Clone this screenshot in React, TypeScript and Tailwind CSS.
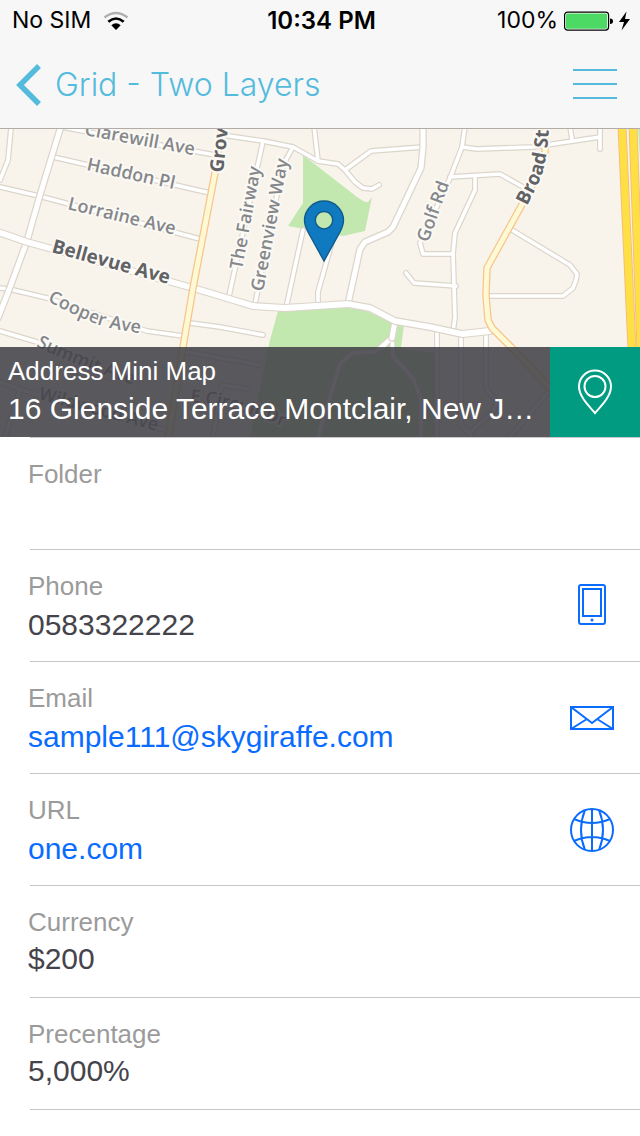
import React from "react";

const minorRoads = [
  "M11 128L8 160L0 180",
  "M62 127L83 131L215 155",
  "M53 157L210 193",
  "M0 187L39 196L200 239",
  "M0 288L9 289L47 298L147 331L183 336",
  "M0 331L37 342L110 378",
  "M190 323L220 327L263 335",
  "M222 135L263 141L293 147L318 161L338 164L345 170L355 182L363 188L372 189L379 185",
  "M314 126L318 161",
  "M345 170L371 151L423 147",
  "M263 141L229 296",
  "M293 147L283 165L255 304",
  "M303 230L286 308",
  "M332 242L318 292L318 306",
  "M465 126L462 147L450 178L420 243L423 254L453 254",
  "M462 147L477 149L533 147L600 137",
  "M600 126L600 149",
  "M570 126L572 140",
  "M450 177L500 174L523 187",
  "M475 177L475 190L455 233L453 254L455 317L453 332",
  "M406 273L414 283L456 286",
  "M512 230L570 265L577 274L576 280L573 288L563 296L488 296",
  "M437 331V440",
  "M461 334V425L475 440",
  "M486 332V388L497 402L493 412L470 432",
  "M187 352L260 365",
  "M0 382L40 396L165 430",
  "M20 390L5 437",
  "M213 437L222 385L248 389",
  "M382 348L392 337",
  "M318 437L332 390L340 364L352 353L375 352L392 337",
  "M392 337L393 356L414 380L421 400V437",
  "M550 390L510 437",
];

const midRoads = [
  "M61 126L40 195L27 241L9 290L-2 318",
  "M423 126L423 147L421 168L393 227L388 232L365 242L360 249L348 304",
  "M395 321L392 338",
];

const mainRoads = [
  "M-2 232L27 242L193 288L210 293L253 306L285 308L348 304L370 308L395 321L430 327L462 334L490 331",
];

const arterials = [
  "M222 126L215 173L193 288L183 347L168 440",
  "M545 126L545 152L530 190L487 268L486 295L488 320L492 328L512 348L550 388",
];

const highways = ["M622 126L632 350L635 440", "M633 126L641 350L644 440"];

const streetNames = [
  { id: "clarewill", name: "Clarewill Ave", d: "M84 135L220 160", bold: false },
  { id: "haddon", name: "Haddon Pl", d: "M86 170L200 195", bold: false },
  { id: "lorraine", name: "Lorraine Ave", d: "M67 209L200 241", bold: false },
  { id: "bellevue", name: "Bellevue Ave", d: "M51 252L190 290", bold: true },
  { id: "cooper", name: "Cooper Ave", d: "M47 301Q78 317 96 324T180 338", bold: false },
  { id: "summit", name: "Summit Ave", d: "M36 346Q70 364 160 394", bold: false },
  { id: "wildwood", name: "Wildwood Ave", d: "M38 399L190 440", bold: false },
  { id: "circuit", name: "E Circuit Dr", d: "M190 402Q240 406 300 434", bold: false },
  { id: "grove", name: "Grove", d: "M223 173L231 100", bold: true },
  { id: "fairway", name: "The Fairway", d: "M242 270L264 150", bold: false },
  { id: "greenview", name: "Greenview Way", d: "M263 292L292 140", bold: false },
  { id: "golf", name: "Golf Rd", d: "M428 243L456 165", bold: false },
  { id: "broad", name: "Broad St", d: "M527 206L538 184Q548 165 549 120", bold: true },
];

function Roads({
  paths,
  casing,
  fill,
  outer,
  inner,
}: {
  paths: string[];
  casing: string;
  fill: string;
  outer: number;
  inner: number;
}) {
  return (
    <g fill="none" strokeLinejoin="round" strokeLinecap="round">
      {paths.map((d) => (
        <path key={"c" + d} d={d} stroke={casing} strokeWidth={outer} />
      ))}
      {paths.map((d) => (
        <path key={"f" + d} d={d} stroke={fill} strokeWidth={inner} />
      ))}
    </g>
  );
}

function StreetMap() {
  return (
    <svg
      viewBox="0 129 640 308"
      preserveAspectRatio="xMidYMid slice"
      className="block h-full w-full bg-[#f8f4ec]"
      role="img"
      aria-label="Map"
    >
      <g fill="#c2e8b0">
        <path d="M303 155L357 197L365 202L368 202L372 197L365 231L343 236L288 226L303 203Z" />
        <path d="M278 311L350 304L395 323L404 325L401 348L434 353V437H250L270 340Z" />
        <path d="M638 128H640V160Z" />
      </g>
      <Roads paths={minorRoads} casing="#dcd5cb" fill="#ffffff" outer={6} inner={3.6} />
      <Roads paths={midRoads} casing="#dcd5cb" fill="#ffffff" outer={7.5} inner={5} />
      <Roads paths={mainRoads} casing="#dcd5cb" fill="#ffffff" outer={8} inner={5.8} />
      <Roads paths={arterials} casing="#f9c48a" fill="#fdf9d4" outer={7.5} inner={5} />
      <Roads paths={highways} casing="#f7bd7c" fill="#ffe044" outer={9} inner={7} />
      <defs>
        {streetNames.map((s) => (
          <path key={s.id} id={"street-" + s.id} d={s.d} />
        ))}
      </defs>
      <g
        fontFamily="'Open Sans', 'Noto Sans', sans-serif"
        stroke="#fbf9f4"
        strokeWidth="4"
        strokeLinejoin="round"
        style={{ paintOrder: "stroke" }}
      >
        {streetNames.map((s) => (
          <text
            key={s.id}
            fontSize={s.bold ? 19 : 18}
            fontWeight={s.bold ? 700 : 600}
            fill={s.bold ? "#616265" : "#85878b"}
          >
            <textPath href={"#street-" + s.id}>{s.name}</textPath>
          </text>
        ))}
      </g>
      <path
        fillRule="evenodd"
        d="M324 261L308 232C306 228 304.500 224.500 304.500 220.500A19.500 19.500 0 0 1 343.500 220.500C343.500 224.500 342 228 340 232ZM324 211.500A8.700 8.700 0 1 0 324 228.900A8.700 8.700 0 1 0 324 211.500Z"
        fill="#0f7abf"
        stroke="#125a8c"
        strokeWidth="1.4"
      />
    </svg>
  );
}

function PhoneIcon() {
  return (
    <svg viewBox="0 0 44 44" className="size-11" fill="none" stroke="#0a6cff" strokeWidth="2">
      <rect x="9" y="1" width="26" height="39" rx="2" />
      <rect x="13" y="5" width="18" height="27" />
      <circle cx="22" cy="36" r="1.500" fill="#0a6cff" stroke="none" />
    </svg>
  );
}

function MailIcon() {
  return (
    <svg viewBox="0 0 44 44" className="size-11" fill="none" stroke="#0a6cff" strokeWidth="2">
      <rect x="1" y="11" width="42" height="22" />
      <path d="M1 11L22 27L43 11M1 33L17 23M43 33L27 23" />
    </svg>
  );
}

function GlobeIcon() {
  return (
    <svg viewBox="0 0 44 44" className="size-11" fill="none" stroke="#0a6cff" strokeWidth="2">
      <circle cx="22" cy="22" r="21" />
      <path d="M22 1V43M15 2Q7 22 15 42M29 2Q37 22 29 42M4 11Q22 19 40 11M4 33Q22 25 40 33" />
    </svg>
  );
}

type Field = { label: string; value: string; href?: string; icon?: React.ReactNode; link?: boolean };

const fields: Field[] = [
  { label: "Folder", value: "" },
  { label: "Phone", value: "0583322222", href: "tel:0583322222", icon: <PhoneIcon /> },
  {
    label: "Email",
    value: "sample111@skygiraffe.com",
    href: "mailto:sample111@skygiraffe.com",
    icon: <MailIcon />,
    link: true,
  },
  { label: "URL", value: "one.com", href: "#one.com", icon: <GlobeIcon />, link: true },
  { label: "Currency", value: "$200" },
  { label: "Precentage", value: "5,000%" },
];

function FieldRow({ field }: { field: Field }) {
  const { label, value, href, icon, link } = field;
  return (
    <div className="ml-[30px] flex h-28 items-center justify-between border-b border-[#c8c7cc] pr-[26px]">
      <dl className="-ml-0.5 h-full min-w-0 pt-5">
        <dt className="text-[26px] leading-8 text-[#9b9b9b]">{label}</dt>
        <dd
          className={
            "truncate text-[30px] leading-9 " +
            (icon ? "mt-[5px] " : "mt-[3px] ") +
            (link ? "text-[#0a6cff]" : "text-[#45444b]")
          }
        >
          {link ? <a href={href}>{value}</a> : value}
        </dd>
      </dl>
      {icon && (
        <a href={href} aria-label={label} className="shrink-0">
          {icon}
        </a>
      )}
    </div>
  );
}

function StatusBar() {
  return (
    <div className="flex h-[41px] items-center pr-[9px] pl-3 font-['Inter',sans-serif] text-[23px] text-black">
      <div className="flex flex-1 items-center gap-3">
        <span>No SIM</span>
        <svg viewBox="0 0 26 20" className="h-5 w-[26px]" fill="none">
          <path d="M1.500 6.500Q13 -2.500 24.500 6.500" stroke="#b0b0b0" strokeWidth="2.600" />
          <path d="M5.300 10.700Q13 4.300 20.700 10.700" stroke="#000" strokeWidth="2.600" />
          <path d="M8.300 14.200Q13 10.200 17.700 14.200L13 19Z" fill="#000" />
        </svg>
      </div>
      <div className="text-center text-2xl font-semibold">10:34 PM</div>
      <div className="flex flex-1 items-center justify-end gap-1.5">
        <span>100%</span>
        <svg viewBox="0 0 67 20" className="h-5 w-[67px]">
          <rect x="0.600" y="1.100" width="44" height="18" rx="3" fill="#fff" stroke="#000" strokeWidth="1.200" />
          <rect x="2" y="2.500" width="41.200" height="15.200" rx="1.500" fill="#4cd964" />
          <path d="M46 7.500Q49 7.500 49 10.200T46 13Z" fill="#000" />
          <path d="M62.500 0.500L55 11H60L57.500 19.500L66 8H61Z" fill="#000" />
        </svg>
      </div>
    </div>
  );
}

export default function App() {
  return (
    <main className="min-h-screen bg-white font-['Liberation_Sans',Arial,sans-serif]">
      <header className="border-b border-[#b2aca8] bg-[#f7f7f7]">
        <StatusBar />
        <nav className="flex h-[87px] items-center justify-between pr-[23px] pl-4">
          <button
            type="button"
            className="flex items-center gap-3.5 font-['Inter',sans-serif] text-[32px] font-light text-[#55bbdd]"
          >
            <svg viewBox="0 0 25 42" className="h-[42px] w-[25px]" fill="none" stroke="#55bbdd" strokeWidth="5.500">
              <path d="M23 2L4 21L23 40" />
            </svg>
            <h1>Grid - Two Layers</h1>
          </button>
          <button type="button" aria-label="Menu">
            <svg viewBox="0 0 44 32" className="h-8 w-11" stroke="#55bbdd" strokeWidth="2">
              <path d="M0 1H44M0 15H44M0 29H44" />
            </svg>
          </button>
        </nav>
      </header>

      <section className="relative h-[308px] overflow-hidden">
        <StreetMap />
        <div className="absolute inset-x-0 bottom-0 flex h-[90px]">
          <div className="min-w-0 flex-1 bg-[#424047]/87 pt-2 pl-2 text-white">
            <p className="text-[26px] leading-8">Address Mini Map</p>
            <p className="mt-1 overflow-hidden text-[30px] leading-9 whitespace-nowrap">
              16 Glenside Terrace Montclair, New J…
            </p>
          </div>
          <button
            type="button"
            aria-label="Open map"
            className="flex w-[90px] shrink-0 items-center justify-center bg-[#009b80]"
          >
            <svg viewBox="0 0 36 46" className="h-[46px] w-9" fill="none" stroke="#fff" strokeWidth="2">
              <path d="M18 44C13 38 2 28 2 17.500A16 16 0 0 1 34 17.500C34 28 23 38 18 44Z" />
              <circle cx="18" cy="17.500" r="10.500" />
            </svg>
          </button>
        </div>
      </section>

      <section>
        <div className="ml-[30px] border-t border-[#c8c7cc]" />
        {fields.map((field) => (
          <FieldRow key={field.label} field={field} />
        ))}
      </section>
    </main>
  );
}
